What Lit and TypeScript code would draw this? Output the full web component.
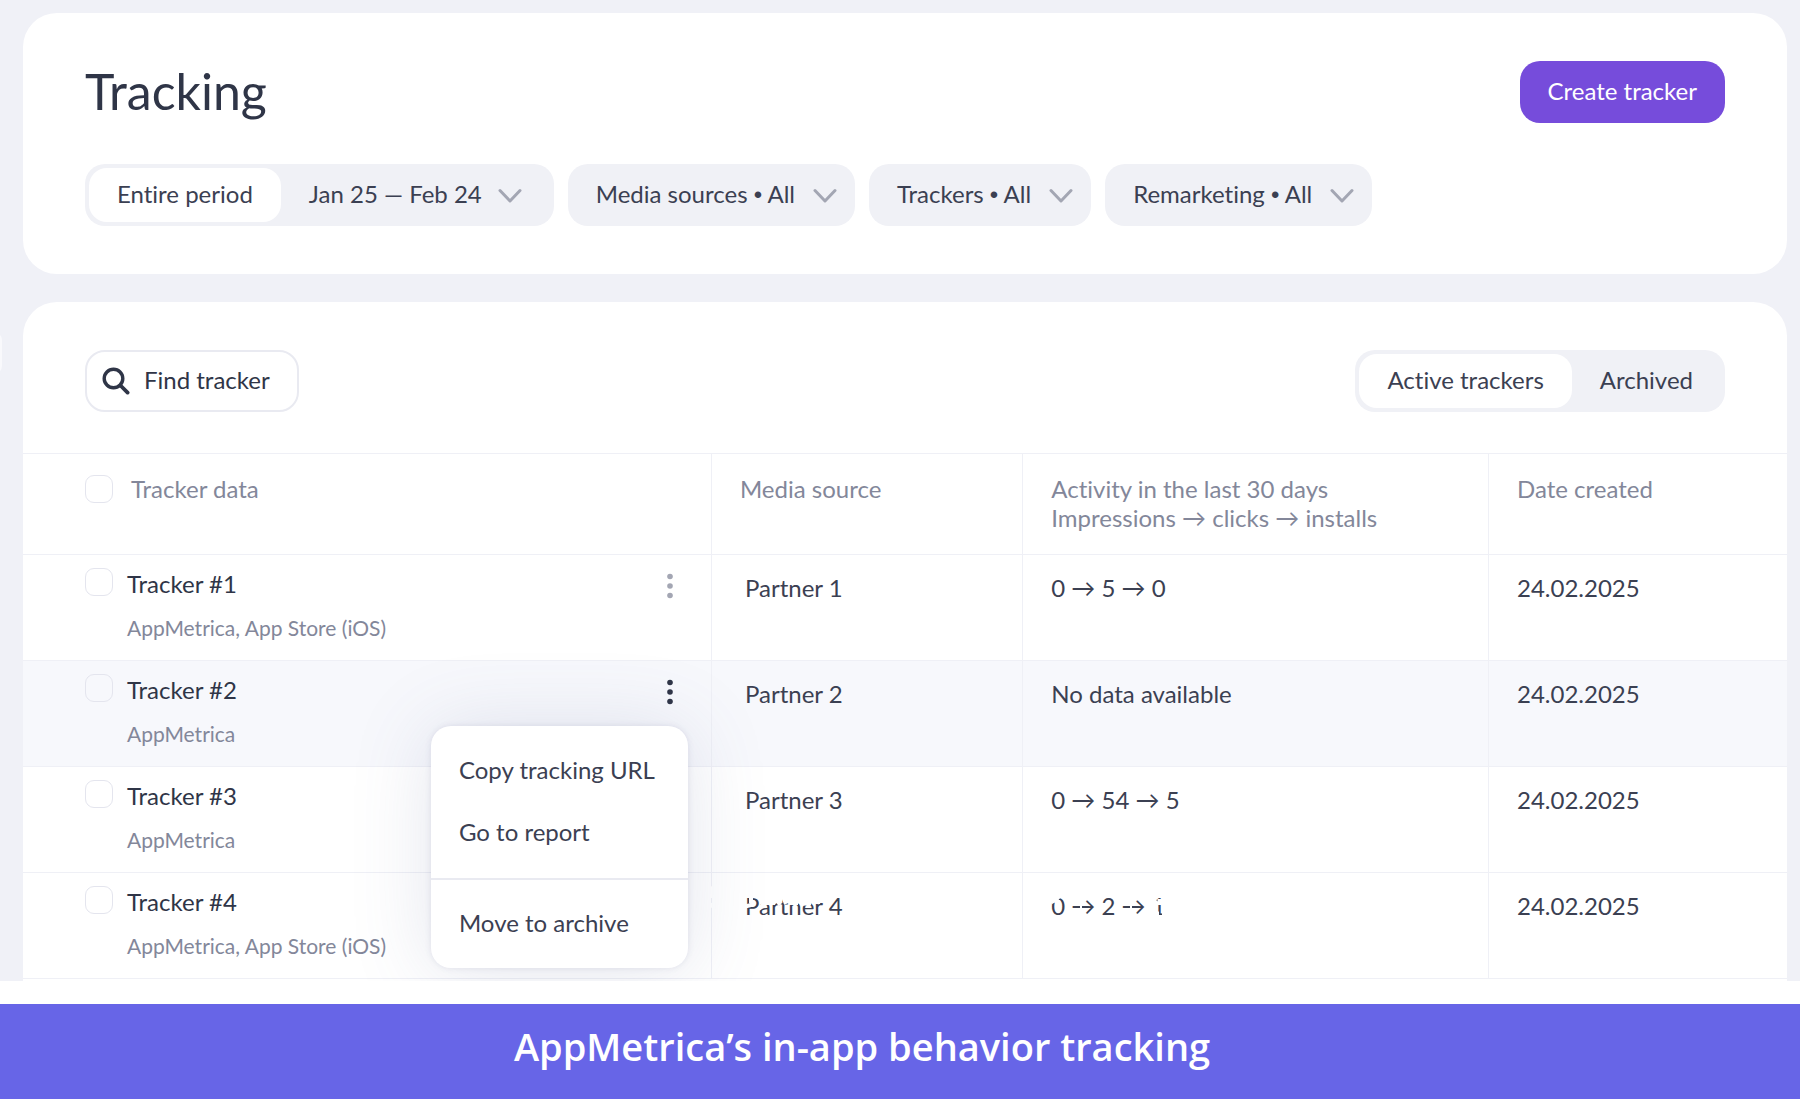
import { LitElement, html, css, svg } from "lit";
import { customElement } from "lit/decorators.js";

interface Tracker {
  name: string;
  platforms: string;
  partner: string;
  activity: string;
  date: string;
  active?: boolean;
}

const TRACKERS: Tracker[] = [
  { name: "Tracker #1", platforms: "AppMetrica, App Store (iOS)", partner: "Partner 1", activity: "0 → 5 → 0", date: "24.02.2025" },
  { name: "Tracker #2", platforms: "AppMetrica", partner: "Partner 2", activity: "No data available", date: "24.02.2025", active: true },
  { name: "Tracker #3", platforms: "AppMetrica", partner: "Partner 3", activity: "0 → 54 → 5", date: "24.02.2025" },
  { name: "Tracker #4", platforms: "AppMetrica, App Store (iOS)", partner: "Partner 4", activity: "0 → 2 → 1", date: "24.02.2025" },
];

const chevron = svg`<svg class="chevron" viewBox="0 0 24 16" width="24" height="16" aria-hidden="true">
  <path d="M2 2.5 12 13 22 2.5" fill="none" stroke="#a3a6b3" stroke-width="3" stroke-linecap="round" stroke-linejoin="round"/></svg>`;

const lens = svg`<svg viewBox="0 0 28 28" width="28" height="28" aria-hidden="true">
  <circle cx="11.5" cy="11.5" r="9.3" fill="none" stroke="#2f3547" stroke-width="3.4"/>
  <path d="M18.5 18.5 25.6 25.6" stroke="#2f3547" stroke-width="3.8" stroke-linecap="round"/></svg>`;

const dots = svg`<svg viewBox="0 0 8 28" width="8" height="28" aria-hidden="true" fill="currentColor">
  <circle cx="4" cy="4.5" r="2.8"/><circle cx="4" cy="14" r="2.8"/><circle cx="4" cy="23.5" r="2.8"/></svg>`;

// White worn patches over the last row's values.
const partnerWear = svg`<svg class="wear" viewBox="0 0 100 30" width="100" height="30" aria-hidden="true" fill="none" stroke="#fff" stroke-width="4">
  <path d="M0 15.5 6 14M6 5v7M14 18l7-8M20 12h10M31 6l4 8M38 5l3 8M44 12h9M56 13l10-1M67 11h8M82 5l4 4"/></svg>`;
const activityWear = svg`<svg class="wear" viewBox="0 0 120 30" width="120" height="30" aria-hidden="true" fill="none" stroke="#fff" stroke-width="5">
  <path d="M0 11 8 5M3 8l5 4"/><path d="M30 19v-7M80 19v-7" stroke-width="2"/><path d="M101 14l5-4M109 8v6M103 23h5M111 23h6"/></svg>`;

@customElement("app-root")
export class AppRoot extends LitElement {
  static styles = css`
    :host {
      display: block;
      font-family: Lato, "Noto Sans", "DejaVu Sans", sans-serif;
      font-size: 24px;
      line-height: 29px;
      font-variant-ligatures: none;
      color: #3b4052;
    }
    * { box-sizing: border-box; }
    button, input { font: inherit; color: inherit; font-variant-ligatures: none; }
    button { border: 0; background: none; padding: 0; margin: 0; cursor: pointer; white-space: nowrap; }
    .page { position: relative; overflow: hidden; background: #f0f1f7; padding: 13px 13px 0 23px; display: flex; flex-direction: column; gap: 28px; }
    .edge { position: absolute; left: -18px; top: 332px; width: 20px; height: 42px; border-radius: 8px; background: #f9f9fc; }
    .card { background: #fff; border-radius: 34px; }
    .head { padding: 48px 62px; display: flex; flex-direction: column; gap: 41px; }
    .bar { display: flex; align-items: center; justify-content: space-between; }
    h1 { margin: 0; font-size: 50px; line-height: 60px; padding-bottom: 2px; font-weight: 400; color: #2f3547; }
    .create { height: 62px; padding: 0 28px 3px; border-radius: 20px; background: #764cdb; color: #fff; }
    .filters { display: flex; gap: 14px; }
    .group { display: flex; background: #f0f1f6; border-radius: 20px; padding: 4px; }
    .segment { height: 54px; padding: 0 28px 3px; border-radius: 18px; display: flex; align-items: center; gap: 16px; }
    .on { background: #fff; }
    .filter { height: 62px; padding: 0 18px 3px 28px; border-radius: 20px; background: #f0f1f6; display: flex; align-items: center; gap: 18px; }
    .chevron { position: relative; top: 2px; }
    .bullet { font-family: "Liberation Sans", sans-serif; line-height: 24px; }
    .list { border-radius: 34px 34px 0 0; }
    .tools { padding: 48px 62px 41px; }
    .find { display: flex; align-items: center; gap: 14px; height: 62px; width: 214px; padding: 0 15px; border: 2px solid #e9eaf1; border-radius: 20px; }
    .find input { width: 100%; min-width: 0; border: 0; outline: 0; padding: 0 0 3px; background: none; }
    .find input::placeholder { color: #2f3547; opacity: 1; }
    .find svg { flex: none; }
    table { width: 100%; border-collapse: separate; border-spacing: 0; table-layout: fixed; }
    th, td { border-top: 1px solid #eff0f6; border-left: 1px solid #eff0f6; text-align: left; vertical-align: top; font-weight: 400; padding: 20px 0 0 28px; }
    th { height: 101px; color: #83879a; }
    td { height: 106px; padding-top: 18px; }
    th:first-child, td:first-child { border-left: 0; padding-left: 62px; }
    .c1 { width: 39%; } .c2 { width: 17.65%; } .c3 { width: 26.4%; }
    tbody td:first-child { padding-top: 13px; }
    .selected td { background: #f7f8fc; }
    td.partner { padding-left: 33px; }
    .pick { display: flex; align-items: center; gap: 18px; }
    input[type="checkbox"] { appearance: none; flex: none; width: 28px; height: 28px; margin: 0; border: 1px solid #e4e5ee; border-radius: 9px; background: transparent; }
    .row { display: flex; align-items: flex-start; gap: 14px; position: relative; }
    .what { flex: 1; padding-top: 1px; }
    .name { display: block; color: #2f3547; }
    .platforms { display: block; font-size: 21px; line-height: 24px; margin-top: 18px; color: #83879a; }
    .more { width: 24px; height: 32px; margin: 2px 29px 0 0; display: grid; place-items: center; color: #a3a6b3; }
    .more.open { color: #2f3547; }
    .menu { position: absolute; z-index: 2; top: 52px; right: 23px; width: 257px; background: #fff; border-radius: 20px; padding: 14px 0 0; display: flex; flex-direction: column; box-shadow: 0 4px 80px rgba(90, 100, 150, 0.17), 0 0 6px rgba(70, 76, 120, 0.12); }
    .item { height: 62px; padding: 0 28px 4px; text-align: left; }
    .last { border-top: 2px solid #e9eaf1; height: 90px; margin-top: 14px; }
    .table-end { height: 3px; border-top: 1px solid #eff0f6; }
    .value { position: relative; }
    .wear { position: absolute; left: 0; top: 0; }
    .ghost { position: absolute; z-index: 1; left: 672px; top: 864px; color: #fff; font: 700 42px/56px "Open Sans", "Noto Sans", sans-serif; pointer-events: none; }
    footer { background: #6765e7; margin-top: 23px; height: 95px; padding: 0 76px 11px 0; display: grid; place-items: center; color: #fff; font: 600 38px/48px "Open Sans", "Noto Sans", sans-serif; }
  `;

  private row(t: Tracker, last: boolean) {
    return html`<tr class=${t.active ? "selected" : ""}>
      <td>
        <div class="row">
          <input type="checkbox" aria-label=${t.name} />
          <div class="what"><span class="name">${t.name}</span><span class="platforms">${t.platforms}</span></div>
          <button class="more ${t.active ? "open" : ""}" aria-label="Actions">${dots}</button>
          ${t.active
            ? html`<div class="menu">
                <button class="item">Copy tracking URL</button>
                <button class="item">Go to report</button>
                <button class="item last">Move to archive</button>
              </div>`
            : ""}
        </div>
      </td>
      <td class="partner"><div class="value">${t.partner}${last ? partnerWear : ""}</div></td>
      <td><div class="value">${t.activity}${last ? activityWear : ""}</div></td>
      <td>${t.date}</td>
    </tr>`;
  }

  render() {
    return html`
      <main class="page">
        <div class="edge"></div>
        <section class="card head">
          <div class="bar"><h1>Tracking</h1><button class="create">Create tracker</button></div>
          <div class="filters">
            <div class="group">
              <button class="segment on">Entire period</button>
              <button class="segment">Jan 25 — Feb 24 ${chevron}</button>
            </div>
            ${["Media sources", "Trackers", "Remarketing"].map(
              (label) => html`<button class="filter"><span>${label} <span class="bullet">•</span> All</span>${chevron}</button>`
            )}
          </div>
        </section>
        <section class="card list">
          <div class="bar tools">
            <label class="find">${lens}<input type="text" placeholder="Find tracker" aria-label="Find tracker" /></label>
            <div class="group">
              <button class="segment on">Active trackers</button>
              <button class="segment">Archived</button>
            </div>
          </div>
          <table>
            <thead>
              <tr>
                <th class="c1"><label class="pick"><input type="checkbox" />Tracker data</label></th>
                <th class="c2">Media source</th>
                <th class="c3">Activity in the last 30 days<br />Impressions → clicks → installs</th>
                <th>Date created</th>
              </tr>
            </thead>
            <tbody>${TRACKERS.map((t, i) => this.row(t, i === TRACKERS.length - 1))}</tbody>
          </table>
          <div class="table-end"></div>
        </section>
        <span class="ghost" aria-hidden="true">ser</span>
      </main>
      <footer>AppMetrica’s in-app behavior tracking</footer>
    `;
  }
}
